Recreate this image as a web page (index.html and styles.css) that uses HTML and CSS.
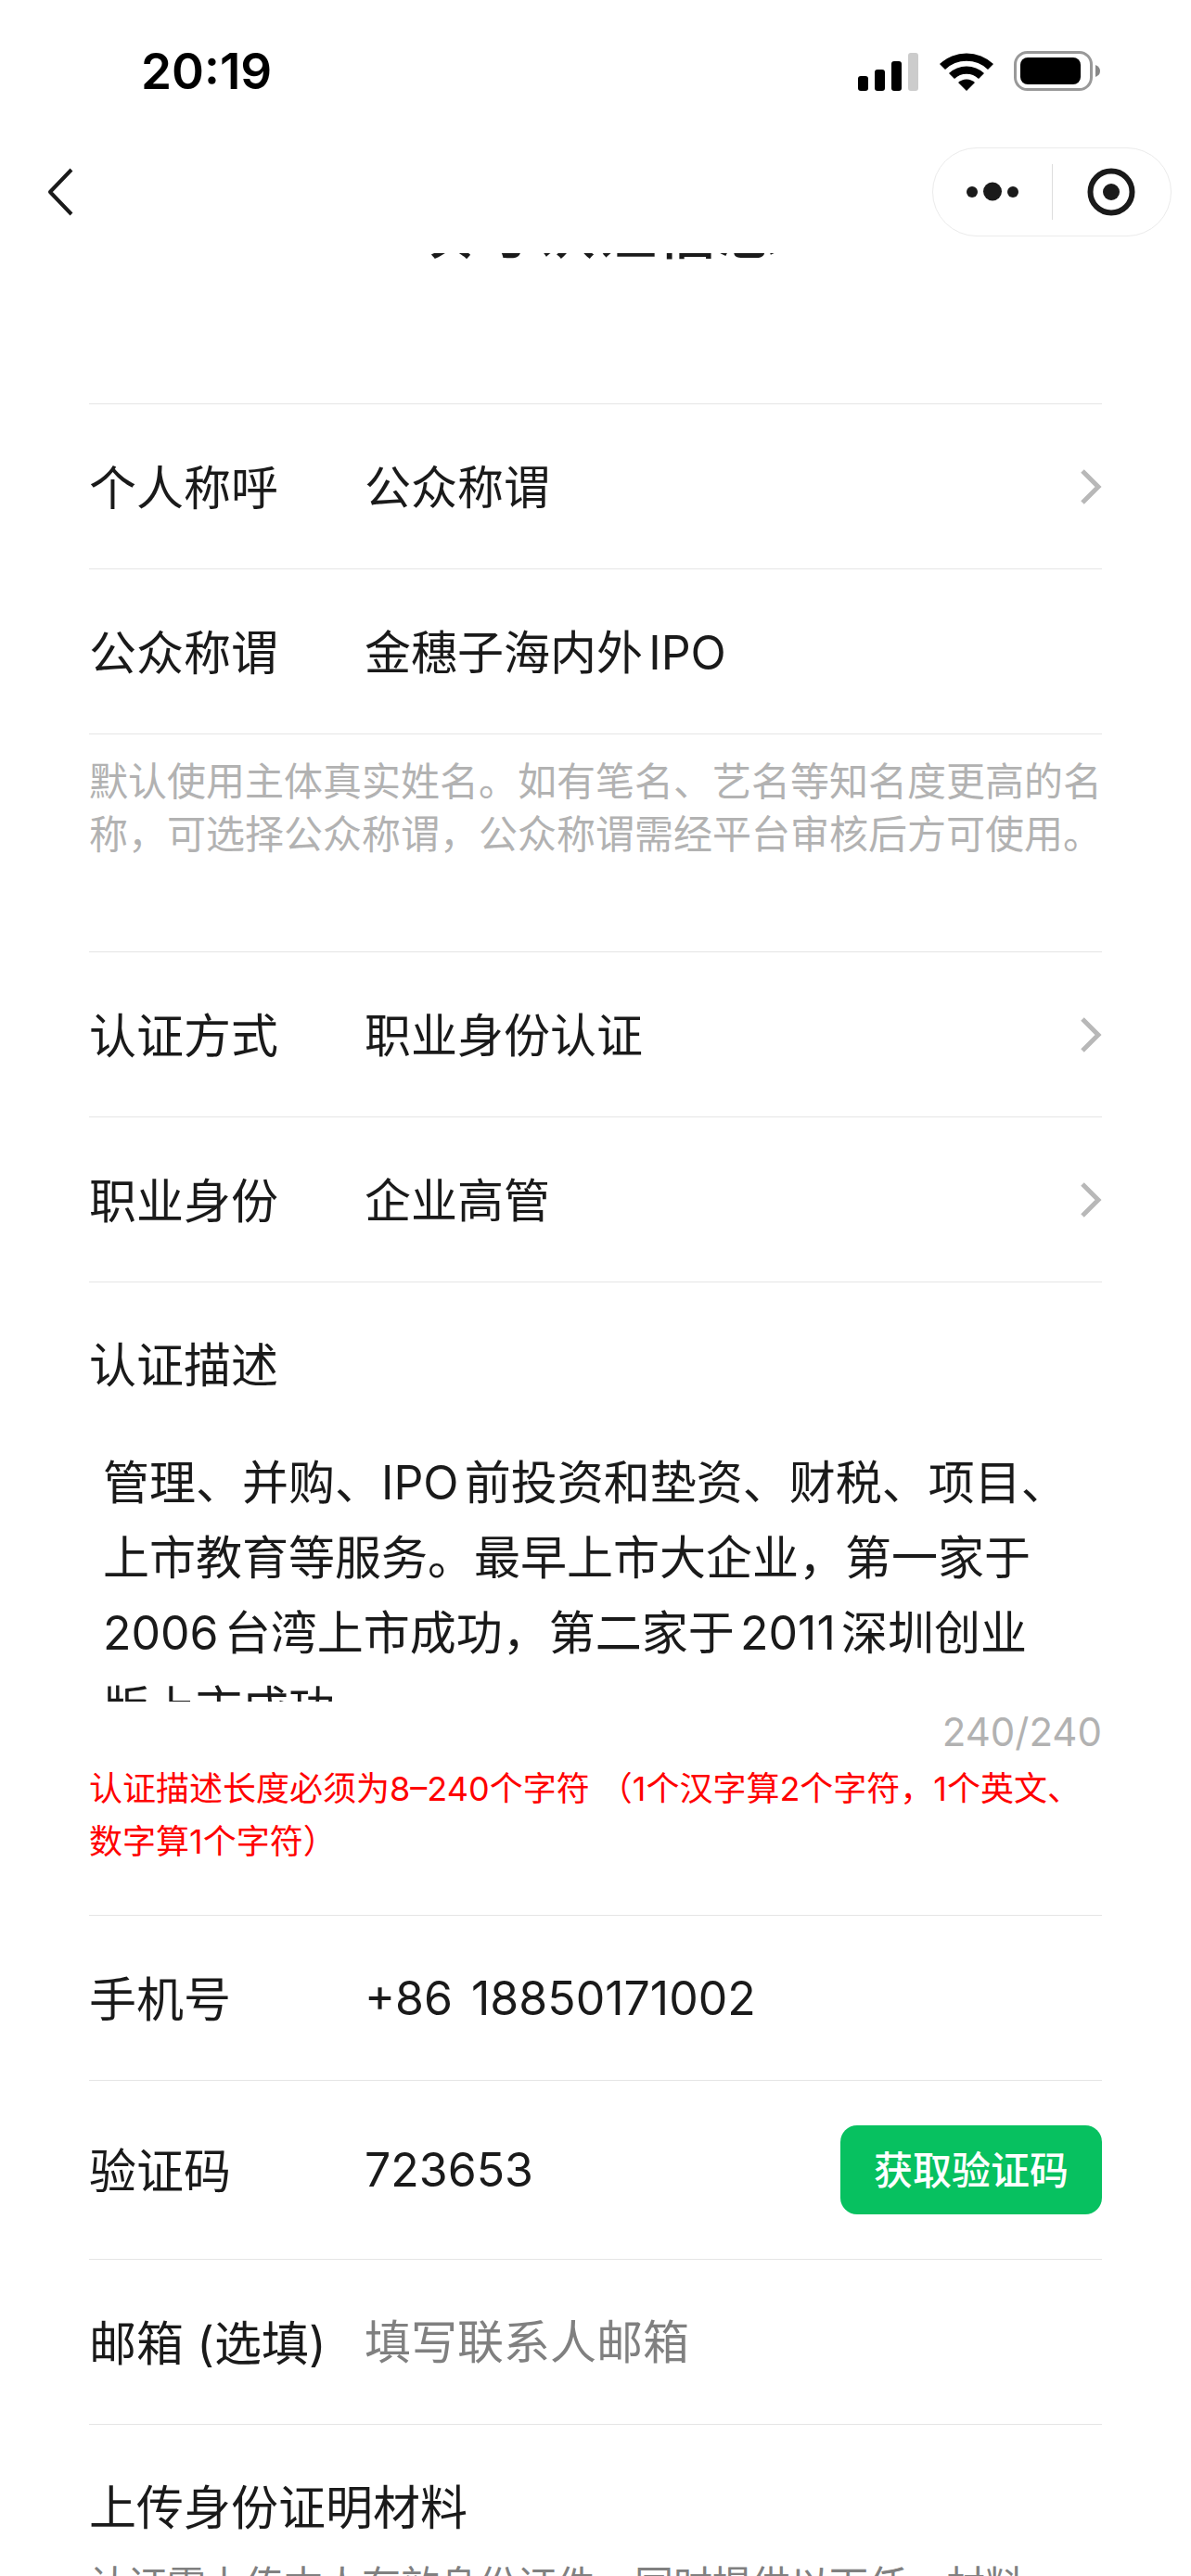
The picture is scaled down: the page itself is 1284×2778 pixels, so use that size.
FILE: index.html
```
<!DOCTYPE html>
<html lang="zh-CN">
<head>
  <meta charset="UTF-8">
  <meta name="viewport" content="width=device-width, initial-scale=1">
  <title>填写认证信息</title>
  <link rel="stylesheet" href="styles.css">
</head>
<body>

  <!-- 状态栏 -->
  <div class="status-bar">
    <span class="time">20:19</span>
    <div class="status-icons">
      <svg width="66" height="42" viewBox="0 0 66 42">
        <rect x="0" y="26" width="11" height="16" rx="3"/>
        <rect x="18" y="19" width="11" height="23" rx="3"/>
        <rect x="36" y="10" width="11" height="32" rx="3"/>
        <rect x="54" y="1" width="11" height="41" rx="3" fill="#ccc"/>
      </svg>
      <svg width="58" height="42" viewBox="0 0 58 42">
        <path d="M0 13 A42 42 0 0 1 58 13 L52 19 A33 33 0 0 0 6 19 Z"/>
        <path d="M10 23 A28 28 0 0 1 48 23 L42 29 A19 19 0 0 0 16 29 Z"/>
        <path d="M20 33 A13 13 0 0 1 38 33 L29 42 Z"/>
      </svg>
      <svg width="94" height="43" viewBox="0 0 94 43">
        <rect x="1.5" y="1.5" width="82" height="40" rx="13" fill="none" stroke="#999" stroke-width="3"/>
        <rect x="7" y="7" width="65" height="29" rx="8"/>
        <path d="M88 15 Q93 17 93 21.500 Q93 26 88 28 Z" fill="#888"/>
      </svg>
    </div>
  </div>

  <!-- 导航栏 -->
  <header class="nav-bar">
    <button class="back" aria-label="返回">
      <svg width="30" height="52" viewBox="0 0 30 52">
        <path d="M27 2 L4 26 L27 50" fill="none" stroke="#1a1a1a" stroke-width="4" stroke-linejoin="round"/>
      </svg>
    </button>
    <div class="capsule">
      <button aria-label="更多">
        <svg width="56" height="22" viewBox="0 0 56 22">
          <circle cx="6" cy="11" r="6"/>
          <circle cx="28" cy="10.500" r="10"/>
          <circle cx="50" cy="11" r="6"/>
        </svg>
      </button>
      <button aria-label="关闭">
        <svg width="52" height="52" viewBox="0 0 52 52">
          <circle cx="26" cy="26" r="22.500" fill="none" stroke="#1a1a1a" stroke-width="6"/>
          <circle cx="26" cy="26" r="9"/>
        </svg>
      </button>
    </div>
  </header>

  <main class="content">
    <h1 class="title">填写认证信息</h1>

    <form class="form">
      <section class="group">
        <div class="row">
          <span class="label">个人称呼</span>
          <button type="button" class="picker">
            <span class="text">公众称谓</span>
            <svg class="arrow" width="24" height="40" viewBox="0 0 24 40"><path d="M3 3 L20 20 L3 37"/></svg>
          </button>
        </div>
        <div class="row">
          <label class="label" for="nickname">公众称谓</label>
          <input class="value text" id="nickname" type="text" value="金穗子海内外IPO">
        </div>
      </section>
      <p class="tips">默认使用主体真实姓名。如有笔名、艺名等知名度更高的名称，可选择公众称谓，公众称谓需经平台审核后方可使用。</p>

      <section class="group">
        <div class="row">
          <span class="label">认证方式</span>
          <button type="button" class="picker">
            <span class="text">职业身份认证</span>
            <svg class="arrow" width="24" height="40" viewBox="0 0 24 40"><path d="M3 3 L20 20 L3 37"/></svg>
          </button>
        </div>
        <div class="row">
          <span class="label">职业身份</span>
          <button type="button" class="picker">
            <span class="text">企业高管</span>
            <svg class="arrow" width="24" height="40" viewBox="0 0 24 40"><path d="M3 3 L20 20 L3 37"/></svg>
          </button>
        </div>
        <div class="desc">
          <label class="desc-label" for="desc">认证描述</label>
          <textarea id="desc">管理、并购、IPO前投资和垫资、财税、项目、上市教育等服务。最早上市大企业，第一家于2006台湾上市成功，第二家于2011深圳创业版上市成功。</textarea>
          <div class="counter">240/240</div>
          <p class="error">认证描述长度必须为8–240个字符 （1个汉字算2个字符，1个英文、数字算1个字符）</p>
        </div>
        <div class="row">
          <label class="label" for="phone">手机号</label>
          <div class="phone">
            <span>+86</span>
            <input class="value" id="phone" type="tel" value="18850171002">
          </div>
        </div>
        <div class="row row-code">
          <label class="label" for="code">验证码</label>
          <input class="value" id="code" type="text" value="723653">
          <button type="button" class="btn-code">获取验证码</button>
        </div>
        <div class="row">
          <label class="label" for="email">邮箱 (选填)</label>
          <input class="value" id="email" type="email" placeholder="填写联系人邮箱">
        </div>
      </section>

      <section class="upload">
        <h2>上传身份证明材料</h2>
        <p>认证需上传本人有效身份证件，同时提供以下任一材料</p>
      </section>
    </form>
  </main>

</body>
</html>
```
FILE: styles.css
```
* {
  box-sizing: border-box;
}

body {
  margin: 0;
  height: 100vh;
  display: flex;
  flex-direction: column;
  overflow: hidden;
  background: #fff;
  color: #1a1a1a;
  font-family: Inter, "Noto Sans CJK SC", sans-serif;
  font-size: 50px;
}

button,
input,
textarea {
  margin: 0;
  padding: 0;
  border: none;
  outline: none;
  background: none;
  color: inherit;
  font: inherit;
}

input,
textarea {
  text-autospace: normal;
}

h1, h2, p {
  margin: 0;
  font-weight: normal;
}

svg {
  display: block;
}

/* 状态栏 */
.status-bar {
  flex: none;
  height: 153px;
  padding: 0 97px 0 152px;
  display: flex;
  align-items: center;
  justify-content: space-between;
  color: #000;
}

.time {
  font-size: 53px;
  font-weight: 600;
}

.status-icons {
  display: flex;
  align-items: center;
  gap: 22px;
}

/* 导航栏 */
.nav-bar {
  flex: none;
  height: 120px;
  padding: 6px 21px 0 50px;
  display: flex;
  align-items: flex-start;
  justify-content: space-between;
}

.back {
  height: 96px;
}

.capsule {
  display: flex;
  width: 258px;
  height: 96px;
  border: 1px solid #ebebeb;
  border-radius: 48px;
}

.capsule button {
  flex: 1;
  display: flex;
  align-items: center;
  justify-content: center;
}

.capsule svg {
  fill: #1a1a1a;
}

.capsule button + button {
  position: relative;
}

.capsule button + button::before {
  content: "";
  position: absolute;
  left: 0;
  top: 17px;
  width: 1px;
  height: 60px;
  background: #ddd;
}

/* 内容 */
.content {
  flex: 1;
  min-height: 0;
  overflow: hidden;
}

.title {
  height: 90px;
  margin-top: -69px;
  margin-bottom: 141px;
  font-size: 66px;
  font-weight: 500;
  line-height: 90px;
  text-align: center;
}

.form {
  padding: 0 96px;
}

.group {
  border-top: 1px solid #e5e5e5;
}

.row {
  display: flex;
  align-items: center;
  height: 178px;
  border-bottom: 1px solid #e5e5e5;
}

.row-code {
  height: 193px;
}

.label {
  flex: none;
  width: 297px;
  padding-bottom: 4px;
  font-size: 51px;
  white-space: nowrap;
}

.value {
  flex: 1;
  min-width: 0;
  height: 80px;
}

.value::placeholder {
  color: #808080;
  opacity: 1;
}

.text {
  padding-bottom: 6px;
}

.picker {
  flex: 1;
  display: flex;
  align-items: center;
  justify-content: space-between;
}

.arrow {
  fill: none;
  stroke: #b8b8b8;
  stroke-width: 5;
}

.tips {
  padding: 22px 0 98px;
  color: #b2b2b2;
  font-size: 42px;
  line-height: 57px;
}

.desc {
  border-bottom: 1px solid #e5e5e5;
  padding: 54px 0 50px;
}

.desc-label {
  display: block;
  font-size: 51px;
  line-height: 72px;
}

.desc textarea {
  display: block;
  width: 100%;
  height: 296px;
  margin-top: 30px;
  padding: 20px 36px 0 15px;
  overflow: hidden;
  resize: none;
  line-height: 81px;
}

.counter {
  color: #b2b2b2;
  font-size: 42px;
  line-height: 66px;
  text-align: right;
}

.error {
  color: #f00;
  font-size: 36px;
  line-height: 57px;
}

.phone {
  flex: 1;
  display: flex;
  align-items: center;
  gap: 20px;
}

.btn-code {
  width: 282px;
  height: 96px;
  padding-bottom: 6px;
  border-radius: 18px;
  background: #07c160;
  color: #fff;
  font-size: 42px;
  font-weight: 500;
}

.upload {
  padding-top: 54px;
}

.upload h2 {
  font-size: 51px;
  line-height: 72px;
}

.upload p {
  margin-top: 18px;
  color: #808080;
  font-size: 42px;
  line-height: 57px;
  white-space: nowrap;
}
```
